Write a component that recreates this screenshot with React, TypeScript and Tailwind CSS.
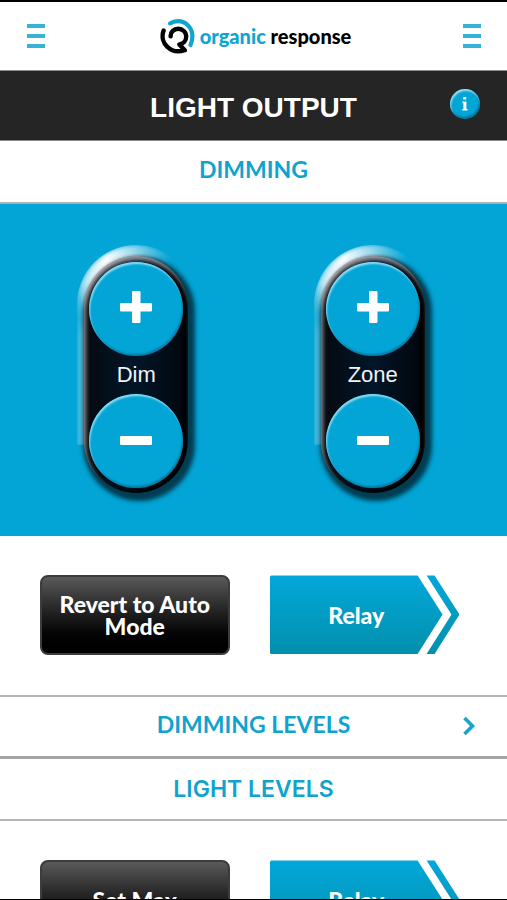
import type { ReactNode } from 'react';

function Logo() {
  return (
    <a href="#home" className="flex items-center gap-1 pl-[3px]" aria-label="organic response">
      <svg width="36" height="36" viewBox="0 0 36 36" fill="none" strokeLinecap="round" aria-hidden="true">
        <path d="M10 5.4C12.5 3.8 15 3.2 18 3.2C26 3.2 32.4 10 32.4 18C32.4 21.5 31.8 24.5 30.5 27" stroke="#0da6d3" strokeWidth="4.2" />
        <path
          d="M3.6 12.5C1.4 18.5 3 25 7.5 29C12 33.4 19 34 24.8 32.2L19.4 26.4C23.4 26 26.2 22.8 26.2 18.6C26.2 14 22.6 10.8 18.2 10.8C14 10.8 10.4 14 10.6 18.4"
          stroke="#000"
          strokeWidth="4.4"
          strokeLinejoin="round"
        />
      </svg>
      <span className="font-['Lato',sans-serif] text-xl leading-6 font-black text-[#0da6d3]">
        organic <span className="text-black">response</span>
      </span>
    </a>
  );
}

function MenuButton({ label }: { label: string }) {
  return (
    <button type="button" aria-label={label} className="flex flex-col gap-[6px]">
      <span className="h-1 w-[18px] bg-[#35b3d6]" />
      <span className="h-1 w-[18px] bg-[#35b3d6]" />
      <span className="h-1 w-[18px] bg-[#35b3d6]" />
    </button>
  );
}

function RoundButton({ label, children }: { label: string; children: ReactNode }) {
  return (
    <button
      type="button"
      aria-label={label}
      className="flex size-[94px] items-center justify-center rounded-full bg-[#02a5d5] pb-1 shadow-[inset_1px_2px_2px_rgba(190,240,255,0.75),inset_-1px_-2px_2px_rgba(0,60,90,0.4)]"
    >
      <svg width="32" height="32" viewBox="0 0 32 32" fill="#fff" aria-hidden="true">
        {children}
      </svg>
    </button>
  );
}

function Rocker({ label }: { label: string }) {
  return (
    <div className="relative">
      {/* bevel: light from the top left, shade to the bottom right */}
      <div className="absolute -inset-x-[7px] -top-[11px] h-[76px] rounded-t-full bg-linear-to-r from-[#9bdcf0] via-white via-25% to-transparent to-80% mask-b-from-50% blur-[2px]" />
      <div className="absolute top-10 bottom-12 -left-[7px] w-[9px] bg-linear-to-r from-[#4cc4e6]/60 to-[#6fcbe8] mask-t-from-75% blur-[1px]" />
      <div className="relative flex flex-col items-center rounded-full bg-linear-to-r from-[#04090f] via-[#021629] to-[#02060b] p-[5px] pt-[6px] shadow-[3px_4px_4px_4px_rgba(0,35,50,0.8),inset_2px_4px_4px_rgba(235,225,230,0.6),inset_-5px_-3px_4px_#000]">
        <RoundButton label={`${label} up`}>
          <rect x="12" y="0" width="8.5" height="32" rx="1.2" />
          <rect x="0" y="12" width="32" height="8.5" rx="1.2" />
        </RoundButton>
        <span className="py-1 text-[22px] leading-[30px] text-[#eef4fa]">{label}</span>
        <RoundButton label={`${label} down`}>
          <rect x="0" y="13" width="32" height="9" rx="1.2" />
        </RoundButton>
      </div>
      {/* bright glint over the dark shade on the upper left rim */}
      <div className="pointer-events-none absolute -inset-x-[3px] -top-1 h-[60px] rounded-t-full border-t-4 border-l-4 border-white/60 mask-r-from-20% mask-r-to-70% mask-b-from-40% blur-[2px]" />
    </div>
  );
}

function DarkButton({ children }: { children: ReactNode }) {
  return (
    <button
      type="button"
      className="flex h-20 items-center justify-center rounded-lg border-2 border-[#3c3c3c] bg-linear-to-b from-[#5a5a5a] to-black px-3 font-['Lato',sans-serif] text-[23px] leading-[22px] font-black text-white"
    >
      {children}
    </button>
  );
}

function RelayButton({ id }: { id: string }) {
  return (
    <button type="button" className="relative flex h-20 items-center justify-center pr-4">
      <svg className="absolute inset-0 size-full" viewBox="0 0 190 80" preserveAspectRatio="none" aria-hidden="true">
        <defs>
          <linearGradient id={id} x1="0" y1="0" x2="0" y2="80" gradientUnits="userSpaceOnUse">
            <stop offset="0" stopColor="#02a8da" />
            <stop offset="1" stopColor="#028fac" />
          </linearGradient>
        </defs>
        <g fill={`url(#${id})`}>
          <path d="M1.5 0.5H148L173 39.5L148 79H1.5Q0 79 0 77.5V2Q0 0.5 1.5 0.5Z" />
          <path d="M157 0.5H165L190 39.5L165 79H157L182 39.5Z" />
        </g>
      </svg>
      <span className="relative font-['Lato',sans-serif] text-[23px] leading-[22px] font-black text-white">Relay</span>
    </button>
  );
}

export default function App() {
  return (
    <div className="flex h-screen flex-col border-t-2 border-b border-black bg-white font-['Liberation_Sans',Arial,sans-serif]">
      <header className="flex h-[68px] shrink-0 items-center justify-between pr-[26px] pl-[27px]">
        <MenuButton label="Menu" />
        <Logo />
        <MenuButton label="Options" />
      </header>

      <div className="relative flex h-[71px] shrink-0 items-center justify-center border-y border-[#8a8a8a] bg-[#252525]">
        <h1 className="pt-1 text-[28px] leading-8 font-bold text-white">LIGHT OUTPUT</h1>
        <button
          type="button"
          aria-label="Information"
          className="absolute top-[18px] right-[27px] flex size-[30px] items-center justify-center rounded-full bg-[#02a5d5] shadow-[inset_1px_2px_2px_rgba(190,235,250,0.8),inset_-1px_-2px_2px_rgba(0,70,100,0.5)]"
        >
          <svg width="6" height="14" viewBox="0 0 6 14" fill="#fff" aria-hidden="true">
            <rect x="1.2" y="0" width="3" height="2.6" rx="0.6" />
            <path d="M0.4 4.6H4.4V12H5.6V13.6H0.2V12H1.4V6.2H0.4Z" />
          </svg>
        </button>
      </div>

      <main className="min-h-0 flex-1 overflow-y-auto [scrollbar-width:none]">
        <section>
          <h2 className="flex h-[63px] items-center justify-center border-b-2 border-[#a9b4b8] pb-1 font-['Lato',sans-serif] text-[23px] font-bold text-[#0fa3cf]">
            DIMMING
          </h2>
          <div className="grid grid-cols-2 justify-items-center bg-[#02a5d5] pt-[52px] pr-4 pb-[43px] pl-[18px]">
            <Rocker label="Dim" />
            <Rocker label="Zone" />
          </div>
          <div className="grid grid-cols-2 gap-10 pt-[39px] pr-12 pb-10 pl-10">
            <DarkButton>Revert to Auto Mode</DarkButton>
            <RelayButton id="relay-dimming" />
          </div>
        </section>

        <a
          href="#dimming-levels"
          className="relative flex h-[61px] items-center justify-center border-t-2 border-[#b4b4b4] pb-1 font-['Lato',sans-serif] text-[23px] font-bold text-[#0fa3cf]"
        >
          DIMMING LEVELS
          <svg className="absolute top-[19px] right-[31px]" width="14" height="20" viewBox="0 0 14 20" fill="none" aria-hidden="true">
            <path d="M2.5 2L10.5 10L2.5 18" stroke="#1ba3c9" strokeWidth="3.6" />
          </svg>
        </a>

        <section>
          <h2 className="flex h-[65px] items-center justify-center border-t-3 border-b-2 border-t-[#a3a3a3] border-b-[#b8b8b8] font-['Inter',sans-serif] text-[23px] font-semibold text-[#0fa3cf]">
            LIGHT LEVELS
          </h2>
          <div className="grid grid-cols-2 gap-10 pt-[39px] pr-12 pb-10 pl-10">
            <DarkButton>Set Max</DarkButton>
            <RelayButton id="relay-light" />
          </div>
        </section>
      </main>
    </div>
  );
}
